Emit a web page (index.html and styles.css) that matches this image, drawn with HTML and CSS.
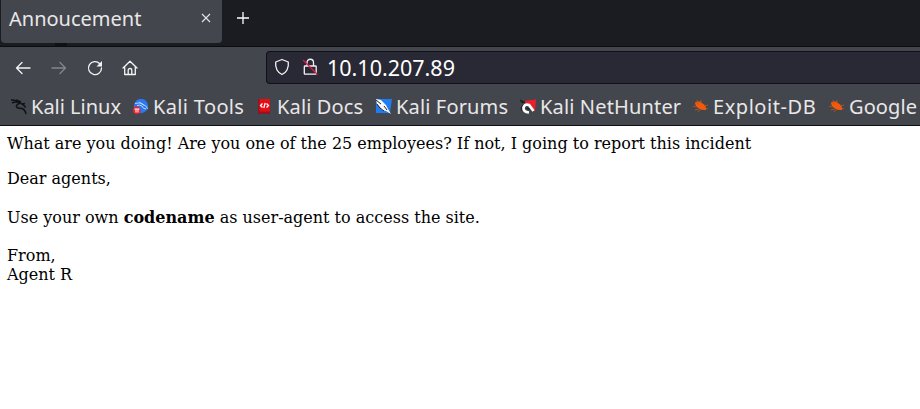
FILE: index.html
```html
<!DOCTYPE html>
<html lang="en">
<head>
<meta charset="utf-8">
<title>Annoucement</title>
<link rel="stylesheet" href="styles.css">
</head>
<body>
<div class="tabs">
  <div class="tab"><span class="tab-title">Annoucement</span>
    <svg class="close" width="10" height="10" viewBox="0 0 10 10"><path d="M1 1l8 8M9 1L1 9"/></svg>
  </div>
  <svg class="plus" width="14" height="14" viewBox="0 0 14 14"><path d="M7 1v12M1 7h12"/></svg>
</div>
<nav class="toolbar">
  <svg class="nav-icon" width="16" height="16" viewBox="0 0 16 16"><path d="M15 8H1.5M7 2.5L1.5 8 7 13.5"/></svg>
  <svg class="nav-icon disabled" width="16" height="16" viewBox="0 0 16 16"><path d="M1 8h13.5M9 2.5L14.500 8 9 13.500"/></svg>
  <svg class="nav-icon" width="16" height="16" viewBox="0 0 16 16"><path d="M12.800 3.700A6.500 6.500 0 1 0 14.500 8"/><path class="solid" d="M15 1v5.500H9.500z"/></svg>
  <svg class="nav-icon home" width="16" height="16" viewBox="0 0 16 16"><path d="M1 8l7-6.700L15 8M2.700 6.700v7.800h10.600V6.700M6.200 14.500V10q0-1.500 1.800-1.500T9.800 10v4.500"/></svg>
  <div class="address">
    <svg class="nav-icon" width="16" height="18" viewBox="0 0 16 18"><path d="M8 1.500L14.300 4q.5 4.500-1.300 8-1.500 2.800-5 4.500Q4.500 14.800 3 12 1.200 8.500 1.700 4z"/></svg>
    <svg class="nav-icon lock" width="16" height="18" viewBox="0 0 16 18"><path d="M5 8V4.500a3.200 3.200 0 0 1 6.500 0V8M3 8h10.500q.7 0 .7.700v6.800q0 .7-.7.700H3q-.7 0-.7-.7V8.700Q2.300 8 3 8z"/><path class="slash" d="M1.500 2.500l13.500 13.500"/></svg>
    <span class="url">10.10.207.89</span>
  </div>
</nav>
<div class="bookmarks">
  <a class="linux"><svg width="16" height="16" viewBox="0 0 16 16"><path class="dragon" d="M0 1Q5 .5 9 4M1 4Q5 2 9 4q2 1 4 2.500l1.500 2M9 4Q4 6 6 8.500q2 1 5 1 3 1 4 5.500M5 1l5 2M11 5l3-.5"/></svg><span>Kali Linux</span></a>
  <a class="tools"><svg width="16" height="16" viewBox="0 0 16 16"><circle cx="8" cy="7" r="7.200" fill="#2878f0"/><path d="M2 4.500q5-2 9 1.500 3 1 3.500 4M4 6.500q3-1 5 .5 1 3 4 3M6 3l5 3" fill="none" stroke="#b9d5ff"/><circle cx="3.800" cy="11.200" r="3.800" fill="#f01f2e"/><path d="M1.500 10h5M3 10v3.500M5 10v3.500" stroke="#fff" fill="none"/></svg><span>Kali Tools</span></a>
  <a class="docs"><svg width="16" height="16" viewBox="0 0 16 16"><path d="M1 0h12v15H1z" fill="#e80d12"/><path d="M1 0h1.500v15H1zM1 12.500h12V15H1z" fill="#8c1722"/><path d="M5.500 4.500l-2 2 2 2M9.500 4.500l2 2-2 2M8.200 4L6.800 9" fill="none" stroke="#fff" stroke-width="1.300"/></svg><span>Kali Docs</span></a>
  <a class="forums"><svg width="16" height="16" viewBox="0 0 16 16"><path d="M0 0h16l-2 14H0z" fill="#1f7cf2"/><path d="M0 0l5 1 5 5 2 4 3 5-5-3-4-1-5-6z" fill="#f7f7f7"/><path d="M0 1l5 4M8 7l3 4M1 5l3 4 4 3" fill="none" stroke="#23262c"/></svg><span>Kali Forums</span></a>
  <a class="hunter"><svg width="16" height="16" viewBox="0 0 16 16"><path d="M4 2l12-1.500-1 12-5-5z" fill="#ed1e2b"/><path d="M0 1l5 2-3 1zM3 6l-2 3 1 3" fill="#202226" stroke="#202226"/><path d="M9 13.500Q3 13 3.500 8.500 5 4.500 9 6l4.500 6" fill="none" stroke="#fff" stroke-width="2.700"/><path d="M6.500 9l3 1.500" fill="none" stroke="#202226" stroke-width="1.500"/></svg><span>Kali NetHunter</span></a>
  <a class="exploit"><svg width="16" height="16" viewBox="0 0 16 16"><path d="M2 3.500q5-2 7 .5 5 3 4 7-4 .5-7-1.500Q2 7 2 3.500z" fill="#f05a0a"/><path d="M5 5L4 1M8 5V1M11 7l4-1M12 9l3 1M4 8L0 7M6 10l-4 1M8 10l-3 3" fill="none" stroke="#bf551e" stroke-width=".8"/></svg><span>Exploit-DB</span></a>
  <a class="google"><svg width="16" height="16" viewBox="0 0 16 16"><path d="M2 3.500q5-2 7 .5 5 3 4 7-4 .5-7-1.500Q2 7 2 3.500z" fill="#f05a0a"/><path d="M5 5L4 1M8 5V1M11 7l4-1M12 9l3 1M4 8L0 7M6 10l-4 1M8 10l-3 3" fill="none" stroke="#bf551e" stroke-width=".8"/></svg><span>Google</span></a>
</div>
<main>
  <div>What are you doing! Are you one of the 25 employees? If not, I going to report this incident</div>
  <p>Dear agents,<br><br>Use your own <b>codename</b> as user-agent to access the site.<br><br>From,<br>Agent R</p>
</main>
</body>
</html>
```

FILE: styles.css
```css
* { box-sizing: border-box; }
body {
  margin: 0;
  height: 409px;
  overflow: hidden;
  background: #fff;
  color: #000;
  font-family: "Noto Sans", sans-serif;
}
svg { display: block; flex: none; }
.tabs {
  display: flex;
  height: 47px;
  padding-left: 1px;
  background: linear-gradient(#101116, #101116) 55px 43px / 12px 3px no-repeat #1b1c21;
  border-bottom: 1px solid #0c0d11;
}
.tab {
  display: flex;
  width: 221px;
  height: 43px;
  padding: 0 11px 0 8px;
  align-items: center;
  justify-content: space-between;
  background: #44464d;
  border-radius: 0 0 4px 4px;
}
.tab-title {
  color: #e8e8e8;
  font-size: 20px;
  line-height: 28px;
  margin-top: -6px;
}
.close { margin-top: -7px; fill: none; stroke: #e6e6e6; stroke-width: 1.1; }
.plus { margin: 11px 0 0 14px; fill: none; stroke: #fff; stroke-width: 1.3; }
.toolbar {
  display: flex;
  height: 41px;
  padding-left: 15px;
  align-items: center;
  gap: 20px;
  background: #44464d;
}
.nav-icon {
  fill: none;
  stroke: #f4f4f5;
  stroke-width: 1.3;
  stroke-linejoin: round;
  stroke-linecap: round;
}
.home { margin-left: -1px; margin-right: 1px; }
.disabled { stroke: #85868a; }
.solid { fill: #f4f4f5; stroke: none; }
.address {
  display: flex;
  flex: 1;
  align-items: center;
  height: 33px;
  margin-left: 107px;
  padding-left: 7px;
  background: #282934;
  border: 1px solid #101117;
  border-right: 0;
  border-radius: 4px 0 0 4px;
}
.address .nav-icon { margin-top: -2px; }
.address .lock { margin-left: 12px; }
.slash { stroke: #e5194c; }
.url { margin-left: 9px; color: #fff; font-size: 21.500px; line-height: 30px; }
.bookmarks {
  display: flex;
  height: 38px;
  overflow: hidden;
  background: #44464d;
  border-bottom: 1px solid #0c0d11;
  white-space: nowrap;
}
.bookmarks a {
  display: flex;
  flex: none;
  height: 37px;
  align-items: center;
  gap: 4px;
  color: #e8e8e8;
  font-size: 20px;
  line-height: 28px;
}
.bookmarks span { margin-top: 1px; }
.dragon { fill: none; stroke: #111216; stroke-width: 1.5; }
.linux { width: 122px; margin-left: 11px; }
.tools { width: 124px; letter-spacing: 0.35px; }
.docs { width: 119px; letter-spacing: 0.15px; }
.forums { width: 144px; letter-spacing: 0.15px; }
.hunter { width: 173px; letter-spacing: 0.15px; }
.exploit { width: 136px; letter-spacing: 0.55px; }
.google { letter-spacing: 0.1px; }
main {
  padding: 8px 7px;
  font: 16px/19px "DejaVu Serif", serif;
}
main p { margin: 16.200px 0; line-height: 19.200px; }
```
